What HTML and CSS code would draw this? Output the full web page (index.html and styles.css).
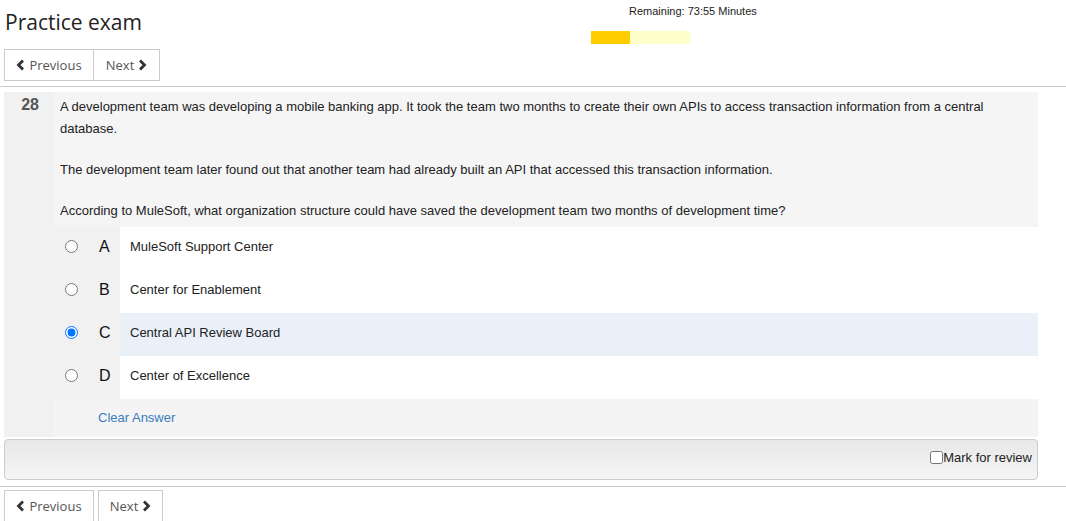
FILE: index.html
```html
<!DOCTYPE html>
<html>
<head>
<meta charset="utf-8">
<title>Practice exam</title>
<link rel="stylesheet" href="styles.css">
</head>
<body>
<div class="header">
  <h1 class="title">Practice exam</h1>
  <div class="timer">
    <div class="timer-text">Remaining: 73:55 Minutes</div>
    <div class="bar"><div class="bar-fill" style="width:39px"></div></div>
  </div>
</div>
<div class="nav">
  <div class="btn-group">
    <button class="btn btn-prev"><svg class="chev" viewBox="0 0 9 12"><path d="M7 1.5 L2.5 6 L7 10.5" /></svg>Previous</button>
    <button class="btn btn-next btn-join">Next<svg class="chev chev-r" viewBox="0 0 9 12"><path d="M2 1.5 L6.5 6 L2 10.5" /></svg></button>
  </div>
</div>
<div class="sep"></div>
<div class="question">
  <div class="qnum">28</div>
  <div class="qbody">
    <div class="qtext">
      <p>A development team was developing a mobile banking app. It took the team two months to create their own APIs to access transaction information from a central database.</p>
      <p>The development team later found out that another team had already built an API that accessed this transaction information.</p>
      <p>According to MuleSoft, what organization structure could have saved the development team two months of development time?</p>
    </div>
    <div class="options">
      <label class="opt"><span class="opt-left"><input type="radio" name="q"><span class="letter">A</span></span><span class="opt-text">MuleSoft Support Center</span></label>
      <label class="opt"><span class="opt-left"><input type="radio" name="q"><span class="letter">B</span></span><span class="opt-text">Center for Enablement</span></label>
      <label class="opt opt-selected"><span class="opt-left"><input type="radio" name="q" checked><span class="letter">C</span></span><span class="opt-text">Central API Review Board</span></label>
      <label class="opt"><span class="opt-left"><input type="radio" name="q"><span class="letter">D</span></span><span class="opt-text">Center of Excellence</span></label>
    </div>
    <div class="clear-row"><a class="clear-link" href="#">Clear Answer</a></div>
  </div>
</div>
<div class="mark-panel">
  <label class="mark"><input type="checkbox" class="mark-box">Mark for review</label>
</div>
<div class="sep sep-bottom"></div>
<div class="nav nav-bottom">
  <button class="btn btn-prev btn-prev-b"><svg class="chev" viewBox="0 0 9 12"><path d="M7 1.5 L2.5 6 L7 10.5" /></svg>Previous</button>
  <button class="btn btn-next btn-next-b">Next<svg class="chev chev-r" viewBox="0 0 9 12"><path d="M2 1.5 L6.5 6 L2 10.5" /></svg></button>
</div>
</body>
</html>
```
FILE: styles.css
```css
html, body {
  margin: 0;
  padding: 0;
  background: #fff;
}
body {
  width: 1066px;
  font-family: "Liberation Sans", Arial, sans-serif;
  color: #222;
  overflow: hidden;
}
.header {
  display: flex;
  height: 45px;
}
.title {
  margin: 0;
  padding: 8px 0 0 5px;
  width: 586px;
  font-family: "Open Sans", sans-serif;
  font-weight: 400;
  font-size: 21px;
  line-height: 28px;
  color: #222;
}
.timer {
  padding-top: 5px;
}
.timer-text {
  font-size: 11px;
  line-height: 13px;
  padding-left: 38px;
  color: #222;
}
.bar {
  margin-top: 13px;
  width: 99px;
  height: 13px;
  background: #ffffcc;
}
.bar-fill {
  height: 13px;
  background: #ffcc00;
}
.nav {
  display: flex;
  padding-left: 4px;
  margin-top: 4px;
}
.btn-group {
  display: flex;
}
.btn {
  display: flex;
  align-items: center;
  justify-content: center;
  box-sizing: border-box;
  height: 32px;
  padding: 0;
  margin: 0;
  border: 1px solid #ccc;
  background: #fff;
  font-family: "Open Sans", sans-serif;
  font-size: 13px;
  color: #555;
  cursor: pointer;
}
.btn-prev {
  width: 90px;
}
.btn-next {
  width: 66px;
}
.btn-join {
  border-left: none;
}
.chev {
  width: 9px;
  height: 12px;
  margin-right: 4px;
  fill: none;
  stroke: #333;
  stroke-width: 2.8;
}
.chev-r {
  margin-right: 0;
  margin-left: 4px;
}
.sep {
  height: 1px;
  background: #ccc;
  margin-top: 5px;
}
.question {
  margin: 5px 0 0 4px;
  width: 1034px;
  display: grid;
  grid-template-columns: 50px 1fr;
  background: #f1f1f1;
}
.qnum {
  font-weight: bold;
  font-size: 16px;
  color: #555;
  text-align: right;
  padding: 4px 15px 0 0;
}
.qtext {
  background: #f5f5f5;
  padding: 4px 6px 5px 6px;
  font-size: 13px;
  line-height: 22px;
}
.qtext p {
  margin: 0 0 19px 0;
}
.qtext p:last-child {
  margin-bottom: 0;
}
.opt {
  display: flex;
  height: 43px;
  cursor: pointer;
}
.opt-left {
  width: 66px;
  display: flex;
  align-items: center;
  padding-bottom: 4px;
  box-sizing: border-box;
}
.opt-left input {
  margin: 0 0 0 11px;
  width: 13px;
  height: 13px;
}
.letter {
  margin-left: 21px;
  font-size: 16px;
  color: #111;
}
.opt-text {
  flex: 1;
  display: flex;
  align-items: center;
  background: #fff;
  padding: 0 0 4px 10px;
  font-size: 13px;
}
.opt-selected .opt-text {
  background: #e9f0f8;
}
.clear-row {
  height: 38px;
  box-sizing: border-box;
  display: flex;
  align-items: center;
  background: #f4f4f4;
  padding: 0 0 2px 44px;
}
.clear-link {
  font-size: 13px;
  color: #3a7dc0;
  text-decoration: none;
}
.mark-panel {
  margin: 2px 0 0 4px;
  width: 1032px;
  height: 39px;
  border: 1px solid #ccc;
  border-radius: 4px;
  background: linear-gradient(#e8e8e8, #f5f5f5);
  display: flex;
  justify-content: flex-end;
  align-items: center;
}
.mark {
  display: flex;
  align-items: center;
  font-size: 13px;
  color: #222;
  padding: 0 5px 5px 0;
}
.mark-box {
  margin: 0;
  width: 13px;
  height: 13px;
}
.sep-bottom {
  margin-top: 6px;
}
.nav-bottom {
  margin-top: 3px;
  gap: 4px;
}
.btn-next-b {
  width: 65px;
}
```
